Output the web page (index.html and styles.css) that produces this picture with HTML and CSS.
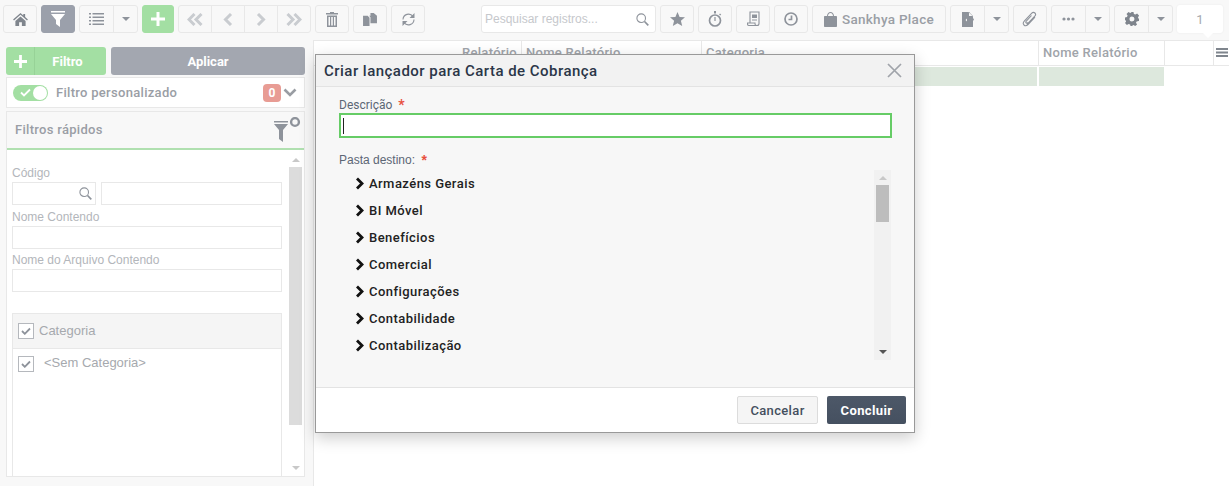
FILE: index.html
```html
<!DOCTYPE html>
<html lang="pt-BR">
<head>
<meta charset="utf-8">
<title>Criar lançador</title>
<link rel="stylesheet" href="styles.css">
</head>
<body>
<header class="toolbar">
  <div class="btn w34"><svg width="15" height="13" viewBox="0 0 16 14"><path class="ic-dark" d="M8 0 0 7l1 1 7-6 7 6 1-1-3-2.600V1h-2v1.800zM2.500 8.500 8 3.800l5.500 4.700V14H9.500V10h-3v4h-4z"/></svg></div>
  <div class="btn w34 active"><svg width="14" height="16" viewBox="0 0 14 16"><path class="ic-white" d="M0 0h14v1.500H0zM0 3h14L9 9v7l-4-3V9z"/></svg></div>
  <div class="group">
    <div class="seg w33"><svg width="15" height="12" viewBox="0 0 15 12"><path class="ic-gray" d="M0 0h2v1.500H0zM3.500 0H15v1.500H3.500zM0 3.500h2V5H0zM3.500 3.500H15V5H3.500zM0 7h2v1.500H0zM3.500 7H15v1.500H3.500zM0 10.500h2V12H0zM3.500 10.500H15V12H3.500z"/></svg></div>
    <div class="seg w26"><span class="caret"></span></div>
  </div>
  <div class="btn add"><svg width="14" height="14" viewBox="0 0 14 14"><path class="ic-white" d="M5.500 0h3v5.500H14v3H8.500V14h-3V8.500H0v-3h5.500z"/></svg></div>
  <div class="group nav">
    <div class="seg"><svg width="16" height="13" viewBox="0 0 16 13"><path class="ic-line" d="M7.500 1 2 6.500 7.500 12M14.500 1 9 6.500l5.500 5.500"/></svg></div>
    <div class="seg"><svg width="10" height="13" viewBox="0 0 10 13"><path class="ic-line" d="M8 1 2.500 6.500 8 12"/></svg></div>
    <div class="seg"><svg width="10" height="13" viewBox="0 0 10 13"><path class="ic-line" d="M2 1l5.500 5.500L2 12"/></svg></div>
    <div class="seg"><svg width="16" height="13" viewBox="0 0 16 13"><path class="ic-line" d="M1.500 1 7 6.500 1.500 12M8.500 1l5.500 5.500L8.500 12"/></svg></div>
  </div>
  <div class="btn w34"><svg width="12" height="15" viewBox="0 0 12 15"><path class="ic-gray" d="M4 0h4v1h4v1.500H0V1h4zM1 3.500h10V15H1zM2.500 5v8.500h1.500V5zM5.200 5v8.500h1.600V5zM8 5v8.500h1.500V5z" fill-rule="evenodd"/></svg></div>
  <div class="btn w34"><svg width="14" height="13" viewBox="0 0 15 14"><path class="ic-gray" d="M0 3h5l2 2v9H0zM8 0h3.500L15 3v8H8V4.500L6.500 3H8z"/></svg></div>
  <div class="btn w34"><svg width="15" height="15" viewBox="0 0 15 15"><path class="ic-thin" d="M2 7.500A5.500 5.500 0 0 1 12 4.500M13 7.500A5.500 5.500 0 0 1 3 10.500"/><path class="ic-gray" d="M13.500 1v5h-5zM1.500 14V9h5z"/></svg></div>
  <div class="search">
    <span class="search-ph">Pesquisar registros...</span>
    <svg width="13" height="13" viewBox="0 0 13 13"><circle class="ic-thin" cx="5.200" cy="5.200" r="4.300"/><path class="ic-thin thick" d="M8.500 8.500 12.300 12.300"/></svg>
  </div>
  <div class="btn w34"><svg width="15" height="14" viewBox="0 0 15 14"><path class="ic-gray" d="M7.500 0l2.100 4.900 5.400.4-4.100 3.500 1.300 5.200-4.700-2.800L2.800 14l1.300-5.200L0 5.300l5.400-.4z"/></svg></div>
  <div class="btn w34"><svg width="14" height="16" viewBox="0 0 14 16"><circle class="ic-thin thick" cx="7" cy="9.500" r="5.500"/><path class="ic-gray" d="M6 0h2v2.500H6zM6.400 6h1.200v4H6.400zM12 2.500l1.200 1-1 1-1.100-1z"/></svg></div>
  <div class="btn w34"><svg width="13" height="16" viewBox="0 0 13 16"><path class="ic-thin" d="M3 12V1h9v11.500c0 1-.8 2-2 2H2c-1 0-1.500-.8-1.500-1.600V12H8v1c0 .8.700 1.500 2 1.500"/><path class="ic-gray" d="M5 3.500h5v3.500H5zM5 8.500h5v1H5z"/></svg></div>
  <div class="btn w34"><svg width="14" height="14" viewBox="0 0 14 14"><circle class="ic-thin thick" cx="7" cy="7" r="6"/><path class="ic-thin thick" d="M7.500 3.500v4H4.500"/></svg></div>
  <div class="btn place"><svg width="13" height="15" viewBox="0 0 13 15"><path class="ic-gray" d="M1 4h11c.6 0 1 .4 1 1v9c0 .6-.4 1-1 1H1c-.6 0-1-.4-1-1V5c0-.6.4-1 1-1zM3 4c0-2 1.500-4 3.500-4S10 2 10 4H9C9 2.500 8 1 6.500 1S4 2.500 4 4z"/></svg><span>Sankhya Place</span></div>
  <div class="group">
    <div class="seg w33"><svg width="12" height="15" viewBox="0 0 12 15"><path class="ic-gray" d="M0 0h6.500L11 4.500V6l1 1.500L11 9v6H0zM5 6.500 3.500 8 5 9.500zM7 0v4h4z"/></svg></div>
    <div class="seg w26"><span class="caret"></span></div>
  </div>
  <div class="btn w34"><svg width="16" height="16" viewBox="0 0 16 16"><path class="ic-thin" d="M5 13.500 12.800 5.200c1-1.100 1-2.300.1-3.200s-2.200-.8-3.100.1L2.500 9.800c-1.500 1.600-1.500 3.200-.5 4.200s2.500 1 4-.5l7-7.300M9.500 4.500 4.300 10.100c-.6.700-.6 1.300-.2 1.700s1 .3 1.600-.3"/></svg></div>
  <div class="group">
    <div class="seg w33"><svg width="13" height="4" viewBox="0 0 13 4"><circle class="ic-gray" cx="2" cy="2" r="1.600"/><circle class="ic-gray" cx="6.500" cy="2" r="1.600"/><circle class="ic-gray" cx="11" cy="2" r="1.600"/></svg></div>
    <div class="seg w26"><span class="caret"></span></div>
  </div>
  <div class="group">
    <div class="seg w33"><svg width="14" height="14" viewBox="0 0 14 14"><path class="ic-dark" fill-rule="evenodd" d="M5.500 0h3l.4 2 1.500.6L12.100 1.500l2 2-1.100 1.700.6 1.500 2 .4v0L14 9h-.4l-2 .4-.6 1.300 1.100 1.700-1.900 1.600-1.700-1.100-1.500.6L8 14H5.500l-.4-1.500-1.500-.6-1.700 1.100-1.900-1.900 1.100-1.700-.6-1.500L0 8.500v-3l2-.4.6-1.500-1.100-1.700 2-1.900 1.700 1.100 1.500-.6zM7 4.500a2.500 2.500 0 1 0 0 5 2.500 2.500 0 0 0 0-5z"/></svg></div>
    <div class="seg w26"><span class="caret"></span></div>
  </div>
  <div class="page">1</div>
</header>

<main class="content">
  <aside class="side">
    <div class="side-actions">
      <div class="filter-btn"><span class="filter-plus"><svg width="13" height="13" viewBox="0 0 14 14"><path class="ic-white" d="M5.500 0h3v5.500H14v3H8.500V14h-3V8.500H0v-3h5.500z"/></svg></span><span class="filter-text">Filtro</span></div>
      <div class="apply-btn">Aplicar</div>
    </div>
    <div class="custom">
      <span class="toggle"><svg width="11" height="9" viewBox="0 0 11 9"><path class="ic-check-w" d="M1 4.500 4 7.500 10 1.500"/></svg><span class="knob"></span></span>
      <span class="custom-text">Filtro personalizado</span>
      <span class="badge">0</span>
      <svg width="14" height="9" viewBox="0 0 14 9"><path class="ic-chev" d="M1.500 1.500 7 7l5.500-5.500"/></svg>
    </div>
    <section class="quick">
      <div class="quick-head">
        <span class="quick-title">Filtros rápidos</span>
        <svg width="27" height="27" viewBox="0 0 27 27"><path class="ic-gray" d="M0 4h14v1.500H0zM0 7h14L9 13v12l-4-3V13z"/><circle class="ic-ring" cx="21" cy="5" r="3.900"/></svg>
      </div>
      <div class="quick-body">
        <div class="quick-form">
          <label class="f-label first">Código</label>
          <div class="f-row">
            <div class="f-input code"><svg width="13" height="13" viewBox="0 0 13 13"><circle class="ic-thin" cx="5.200" cy="5.200" r="4.300"/><path class="ic-thin thick" d="M8.500 8.500 12.300 12.300"/></svg></div>
            <div class="f-input grow"></div>
          </div>
          <label class="f-label">Nome Contendo</label>
          <div class="f-input"></div>
          <label class="f-label tight">Nome do Arquivo Contendo</label>
          <div class="f-input"></div>
          <div class="cat">
            <div class="cat-head"><span class="check"><svg width="10" height="8" viewBox="0 0 10 8"><path class="ic-check" d="M1 4l2.800 2.800L9 1.500"/></svg></span><span>Categoria</span></div>
            <div class="cat-row"><span class="check"><svg width="10" height="8" viewBox="0 0 10 8"><path class="ic-check" d="M1 4l2.800 2.800L9 1.500"/></svg></span><span class="cat-item">&lt;Sem Categoria&gt;</span></div>
          </div>
        </div>
        <div class="sbar light">
          <span class="arr up"></span>
          <span class="thumb-side"></span>
          <span class="arr down"></span>
        </div>
      </div>
    </section>
  </aside>

  <section class="grid">
    <div class="grid-head">
      <div class="gh c1">Relatório</div>
      <div class="gh c2">Nome Relatório</div>
      <div class="gh c3">Categoria</div>
      <div class="gh c4">Nome Relatório</div>
      <div class="gh c5"></div>
      <div class="gh-menu"><svg width="12" height="9" viewBox="0 0 12 9"><path class="ic-dark" d="M0 0h12v2H0zM0 3.500h12v2H0zM0 7h12v2H0z"/></svg></div>
    </div>
    <div class="grid-row">
      <div class="gr c1"></div><div class="gr c2"></div><div class="gr c3"></div><div class="gr c4"></div>
    </div>
  </section>
</main>

<div class="modal">
  <div class="m-head">
    <h1>Criar lançador para Carta de Cobrança</h1>
    <svg width="15" height="15" viewBox="0 0 15 15"><path class="ic-close" d="M1 1l13 13M14 1 1 14"/></svg>
  </div>
  <div class="m-body">
    <label class="m-label">Descrição <b class="req">*</b></label>
    <div class="m-input"><span class="cursor"></span></div>
    <label class="m-label second">Pasta destino: <b class="req">*</b></label>
    <div class="tree-wrap">
      <ul class="tree">
        <li><svg class="chev" width="10" height="13" viewBox="0 0 10 13"><path d="M2 1.500 7 6.500 2 11.500"/></svg>Armazéns Gerais</li>
        <li><svg class="chev" width="10" height="13" viewBox="0 0 10 13"><path d="M2 1.500 7 6.500 2 11.500"/></svg>BI Móvel</li>
        <li><svg class="chev" width="10" height="13" viewBox="0 0 10 13"><path d="M2 1.500 7 6.500 2 11.500"/></svg>Benefícios</li>
        <li><svg class="chev" width="10" height="13" viewBox="0 0 10 13"><path d="M2 1.500 7 6.500 2 11.500"/></svg>Comercial</li>
        <li><svg class="chev" width="10" height="13" viewBox="0 0 10 13"><path d="M2 1.500 7 6.500 2 11.500"/></svg>Configurações</li>
        <li><svg class="chev" width="10" height="13" viewBox="0 0 10 13"><path d="M2 1.500 7 6.500 2 11.500"/></svg>Contabilidade</li>
        <li><svg class="chev" width="10" height="13" viewBox="0 0 10 13"><path d="M2 1.500 7 6.500 2 11.500"/></svg>Contabilização</li>
      </ul>
      <div class="sbar modal-bar">
        <span class="arr up"></span>
        <span class="thumb-modal"></span>
        <span class="arr down dark"></span>
      </div>
    </div>
  </div>
  <div class="m-foot">
    <div class="m-btn cancel">Cancelar</div>
    <div class="m-btn ok">Concluir</div>
  </div>
</div>
</body>
</html>
```
FILE: styles.css
```css
* { box-sizing: border-box; }
html, body { height: 100%; }
body {
  margin: 0;
  background: #f8f8f8;
  font-family: Roboto, "Liberation Sans", sans-serif;
  font-size: 13px;
  overflow: hidden;
}
svg { display: block; flex: none; }
.ic-dark { fill: #7f858d; }
.ic-white { fill: #fff; }
.ic-gray { fill: #8e939b; }
.ic-line { fill: none; stroke: #c9ccd0; stroke-width: 3; }
.ic-thin { fill: none; stroke: #8e939b; stroke-width: 1.100; }
.ic-ring { fill: none; stroke: #8e939b; stroke-width: 2.400; }
.thick { stroke-width: 1.700; }
.ic-check-w { fill: none; stroke: #fff; stroke-width: 1.800; }
.ic-check { fill: none; stroke: #8e939b; stroke-width: 1.800; }
.ic-chev { fill: none; stroke: #999da3; stroke-width: 2.600; }
.ic-close { fill: none; stroke: #a0a4aa; stroke-width: 1.700; }

/* toolbar */
.toolbar {
  display: flex;
  align-items: flex-start;
  height: 40px;
  padding: 5px 0 0 3px;
  gap: 4px;
}
.btn, .seg, .search, .page {
  height: 28px;
  display: flex;
  align-items: center;
  justify-content: center;
}
.btn, .group, .search {
  border: 1px solid #e8e8e8;
  border-radius: 3px;
  background: #f8f8f8;
}
.w34 { width: 34px; }
.active { background: #9ba0ab; border-color: #9ba0ab; }
.group { display: flex; height: 28px; }
.group .seg { height: 26px; }
.seg + .seg { border-left: 1px solid #e8e8e8; }
.w33 { width: 33px; }
.w26 { width: 24px; }
.nav { width: 133px; }
.nav .seg { flex: 1; }
.add { width: 32px; background: #a3dfa3; border-color: #a3dfa3; }
.caret {
  width: 0; height: 0;
  border-left: 4px solid transparent;
  border-right: 4px solid transparent;
  border-top: 4px solid #8e939b;
}
.search {
  width: 175px;
  margin-left: 52px;
  background: #fff;
  justify-content: space-between;
  padding: 0 6px 0 3px;
}
.search-ph { color: #c6c8cc; font-size: 12px; font-family: "Liberation Sans", sans-serif; }
.place { width: 134px; gap: 5px; color: #9a9ea5; font-size: 13.500px; letter-spacing: .3px; font-weight: 500; }
.page {
  width: 46px;
  background: #fff;
  border-radius: 3px;
  color: #a6a9ae;
  font-size: 13px;
  position: relative;
  box-shadow: 0 0 2px #e8e8e8;
}
.page::after {
  content: "";
  position: absolute;
  left: 25px; bottom: -5px;
  width: 0; height: 0;
  border-left: 6px solid transparent;
  border-right: 6px solid transparent;
  border-top: 6px solid #fff;
}

/* layout */
.content { display: flex; height: 446px; }
.side {
  width: 314px;
  flex: none;
  border-right: 1px solid #e8e8e8;
  padding: 7px 8px 0 6px;
  display: flex;
  flex-direction: column;
}
.side-actions { display: flex; gap: 5px; height: 28px; }
.filter-btn {
  width: 100px;
  background: #a3dfa3;
  border-radius: 3px;
  color: #fff;
  font-weight: 700;
  font-size: 13px;
  display: flex;
  align-items: center;
}
.filter-plus {
  width: 29px;
  height: 100%;
  display: flex;
  align-items: center;
  justify-content: center;
  border-right: 1px solid #97d297;
}
.filter-text { flex: 1; text-align: center; padding-right: 6px; }
.apply-btn {
  flex: 1;
  background: #a3a7b0;
  border-radius: 3px;
  color: #fff;
  font-weight: 700;
  font-size: 13px;
  display: flex;
  align-items: center;
  justify-content: center;
}
.custom {
  margin-top: 2px;
  height: 31px;
  background: #fff;
  border: 1px solid #e8e8e8;
  display: flex;
  align-items: center;
  padding: 0 7px 0 6px;
}
.toggle {
  width: 35px;
  height: 16px;
  border-radius: 8px;
  background: #a3dfa3;
  display: flex;
  align-items: center;
  justify-content: space-between;
  padding: 0 1px 0 7px;
}
.knob { width: 14px; height: 14px; border-radius: 50%; background: #fff; }
.custom-text { flex: 1; margin-left: 8px; color: #9a9ea5; font-weight: 500; font-size: 13px; letter-spacing: .3px; }
.badge {
  width: 18px; height: 18px;
  background: #e89c94;
  color: #fff;
  border-radius: 4px;
  text-align: center;
  line-height: 18px;
  font-weight: 700;
  font-size: 12px;
  margin-right: 2px;
}
.quick {
  margin-top: 3px;
  height: 366px;
  border: 1px solid #e8e8e8;
  background: #fff;
  display: flex;
  flex-direction: column;
}
.quick-head {
  height: 38px;
  flex: none;
  background: #f8f8f8;
  border-bottom: 2px solid #b0e0b0;
  display: flex;
  align-items: center;
  justify-content: space-between;
  padding: 0 3px 0 8px;
  color: #9a9ea5;
  font-weight: 500;
  font-size: 13px;
  letter-spacing: .3px;
}
.quick-title { padding-bottom: 2px; }
.quick-body { flex: 1; display: flex; min-height: 0; }
.quick-form { flex: 0 0 280px; padding: 0 0 0 5px; display: flex; flex-direction: column; }
.f-label { color: #b3b6bb; font-size: 12px; line-height: 14px; margin-top: 4px; height: 17px; padding-top: 1px; font-family: "Liberation Sans", sans-serif; display: block; }
.f-label.first { margin-top: 15px; }
.f-label.tight { height: 16px; padding-top: 0; }
.f-row { display: flex; gap: 5px; }
.f-input {
  height: 23px;
  border: 1px solid #e8e8e8;
  background: #fff;
  width: 270px;
  flex: none;
  display: flex;
  align-items: center;
  justify-content: flex-end;
  padding-right: 3px;
}
.f-input.code { width: 84px; }
.f-input.grow { width: 181px; }
.cat {
  margin-top: 21px;
  width: 270px;
  flex: 1;
  border: 1px solid #e8e8e8;
  border-bottom: 0;
}
.cat-head {
  height: 35px;
  background: #f5f5f5;
  border-bottom: 1px solid #e8e8e8;
  display: flex;
  align-items: center;
  padding: 0 0 1px 5px;
  gap: 5px;
  color: #a6a9ae;
  font-size: 13px;
  font-family: "Liberation Sans", sans-serif;
}
.cat-row {
  display: flex;
  align-items: center;
  padding: 6px 0 0 5px;
  color: #a6a9ae;
  font-family: "Liberation Sans", sans-serif;
  font-size: 13px;
}
.cat-item { margin-left: 10px; padding-bottom: 2px; }
.check {
  width: 16px; height: 16px;
  flex: none;
  border: 1px solid #b5b8bd;
  background: #fff;
  display: flex;
  align-items: center;
  justify-content: center;
}

/* scrollbars */
.sbar { display: flex; flex-direction: column; align-items: center; }
.sbar.light { width: 13px; margin: 2px 2px 0 2px; flex: none; background: #fff; }
.arr { width: 0; height: 0; border-left: 4px solid transparent; border-right: 4px solid transparent; flex: none; }
.arr.up { border-bottom: 4px solid #c8c8c8; margin-top: 6px; }
.arr.down { border-top: 4px solid #c8c8c8; margin-bottom: 6px; }
.arr.down.dark { border-top-color: #555; }
.thumb-side { width: 13px; height: 258px; background: #dcdcdc; margin: 5px 0 auto; }
.thumb-modal { width: 13px; height: 37px; background: #bdbdbd; margin: 5px 0 auto; }

/* grid */
.grid { flex: 1; background: #fff; min-width: 0; }
.grid-head {
  height: 26px;
  display: flex;
  border-top: 1px solid #e8e8e8;
  border-bottom: 1px solid #e8e8e8;
  background: #fff;
  overflow: hidden;
}
.gh {
  color: #a0a4aa;
  font-size: 13px;
  font-weight: 500;
  letter-spacing: .3px;
  line-height: 24px;
  border-right: 1px solid #e8e8e8;
  padding-left: 4px;
  flex: none;
}
.c1 { width: 208px; text-align: right; padding-right: 4px; }
.c2 { width: 180px; }
.c3 { width: 337px; }
.c4 { width: 126px; }
.c5 { width: 49px; }
.gh-menu { flex: 1; padding: 7px 0 0 2px; }
.grid-row { display: flex; padding-top: 1px; height: 20px; }
.gr { background: #dde8dd; border-right: 2px solid #fff; flex: none; }
.gr.c1, .gr.c2 { background: #fff; border: 0; }
.gr.c4 { width: 125px; border: 0; }

/* modal */
.modal {
  position: absolute;
  left: 315px;
  top: 54px;
  width: 600px;
  height: 379px;
  background: #f7f7f7;
  border: 1px solid #999;
  box-shadow: 0 5px 15px rgba(0,0,0,.2);
  display: flex;
  flex-direction: column;
}
.m-head {
  height: 32px;
  flex: none;
  background: #f2f2f2;
  border-bottom: 1px solid #e3e3e3;
  display: flex;
  align-items: center;
  justify-content: space-between;
  padding: 0 12px 0 8px;
}
.m-head h1 {
  margin: 0;
  font-size: 15px;
  font-weight: 500;
  letter-spacing: .47px;
  color: #2b3648;
}
.m-body { flex: 1; padding: 11px 22px 0 23px; min-height: 0; }
.m-label { display: block; font-size: 12px; line-height: 14px; height: 15px; color: #5c6675; font-family: Roboto, sans-serif; }
.m-label.second { margin-top: 15px; height: 14px; font-family: "Liberation Sans", sans-serif; }
.req { color: #e8503f; font-weight: 700; font-size: 14px; margin-left: 3px; vertical-align: -1px; }
.m-input {
  height: 25px;
  background: #fff;
  border: 2px solid #66cc66;
  display: flex;
  align-items: center;
  padding-left: 2px;
}
.cursor { width: 1px; height: 16px; background: #222; }
.tree-wrap { display: flex; height: 190px; margin-top: 3px; justify-content: space-between; }
.tree { list-style: none; margin: 0; padding: 0; }
.tree li {
  display: flex;
  align-items: center;
  height: 27px;
  padding-left: 16px;
  gap: 4px;
  color: #222;
  font-size: 13px;
  font-weight: 500;
  letter-spacing: .45px;
}
.chev path { fill: none; stroke: #111; stroke-width: 2.800; }
.modal-bar { width: 17px; background: #f1f1f1; margin-right: 1px; }
.m-foot {
  height: 45px;
  flex: none;
  background: #fff;
  border-top: 1px solid #e3e3e3;
  display: flex;
  justify-content: flex-end;
  gap: 9px;
  padding: 8px 8px 0 0;
}
.m-btn {
  height: 28px;
  border-radius: 2px;
  display: flex;
  align-items: center;
  justify-content: center;
  font-size: 13px;
  font-weight: 500;
}
.cancel { width: 81px; background: #f5f5f5; border: 1px solid #dcdcdc; color: #444f5e; letter-spacing: .35px; }
.ok { width: 79px; background: linear-gradient(#4d5868, #455060); color: #fff; font-weight: 700; letter-spacing: .4px; }
```
